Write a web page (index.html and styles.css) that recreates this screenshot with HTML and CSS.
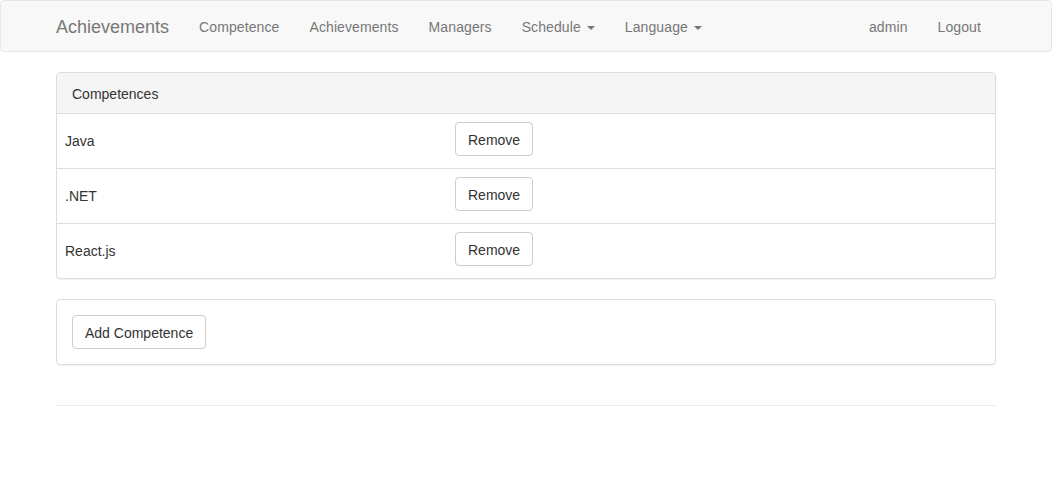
FILE: index.html
```html
<!DOCTYPE html>
<html lang="en">
<head>
<meta charset="utf-8">
<title>Achievements</title>
<link rel="stylesheet" href="styles.css">
</head>
<body>
<nav class="navbar">
  <div class="container navbar-inner">
    <a class="navbar-brand" href="#">Achievements</a>
    <ul class="nav">
      <li><a href="#">Competence</a></li>
      <li><a href="#">Achievements</a></li>
      <li><a href="#">Managers</a></li>
      <li><a href="#">Schedule <span class="caret"></span></a></li>
      <li><a href="#">Language <span class="caret"></span></a></li>
    </ul>
    <ul class="nav nav-right">
      <li><a href="#">admin</a></li>
      <li><a href="#">Logout</a></li>
    </ul>
  </div>
</nav>
<main class="container">
  <section class="panel">
    <div class="panel-heading">Competences</div>
    <div class="rows">
      <div class="row"><div class="cell-name">Java</div><div class="cell-action"><button class="btn">Remove</button></div></div>
      <div class="row"><div class="cell-name">.NET</div><div class="cell-action"><button class="btn">Remove</button></div></div>
      <div class="row"><div class="cell-name">React.js</div><div class="cell-action"><button class="btn">Remove</button></div></div>
    </div>
  </section>
  <section class="panel">
    <div class="panel-body">
      <button class="btn">Add Competence</button>
    </div>
  </section>
  <hr class="divider">
</main>
</body>
</html>
```

FILE: styles.css
```css
* { box-sizing: border-box; }
html, body { margin: 0; padding: 0; }
body {
  font-family: "Liberation Sans", Arial, Helvetica, sans-serif;
  font-size: 14px;
  line-height: 20px;
  color: #333;
  background: #fff;
}
a { text-decoration: none; }
.container {
  width: 970px;
  margin: 0 auto;
  padding: 0 15px;
}
.navbar {
  background: #f8f8f8;
  border: 1px solid #e7e7e7;
  border-radius: 4px;
  min-height: 52px;
  margin-bottom: 20px;
}
.navbar-inner {
  display: flex;
  align-items: stretch;
  height: 50px;
}
.navbar-brand {
  margin-left: -15px;
  padding: 16px 15px 14px;
  font-size: 18px;
  line-height: 20px;
  height: 50px;
  color: #777;
}
.nav {
  list-style: none;
  margin: 0;
  padding: 0;
  display: flex;
}
.nav li a {
  display: block;
  padding: 16px 15px 14px;
  line-height: 20px;
  color: #777;
  letter-spacing: 0.1px;
}
.nav-right {
  margin-left: auto;
}
.caret {
  display: inline-block;
  width: 0;
  height: 0;
  margin-left: 2px;
  vertical-align: middle;
  border-top: 4px solid #777;
  border-left: 4px solid transparent;
  border-right: 4px solid transparent;
}
.panel {
  border: 1px solid #ddd;
  border-radius: 4px;
  margin-bottom: 20px;
  box-shadow: 0 1px 1px rgba(0,0,0,0.05);
  background: #fff;
}
.panel-heading {
  background: #f5f5f5;
  border-bottom: 1px solid #ddd;
  border-radius: 3px 3px 0 0;
  padding: 11px 15px 9px;
  color: #333;
}
.row {
  display: grid;
  grid-template-columns: 390px 1fr;
  align-items: center;
  border-top: 1px solid #ddd;
}
.row:first-child { border-top: 0; }
.cell-name, .cell-action {
  padding: 8px;
}
.cell-action { padding-bottom: 12px; }
.panel-body { padding: 15px; }
.btn {
  display: inline-block;
  font-family: inherit;
  font-size: 14px;
  line-height: 20px;
  padding: 7px 12px 5px;
  height: 34px;
  color: #333;
  background: #fff;
  border: 1px solid #ccc;
  border-radius: 4px;
  cursor: pointer;
}
.divider {
  margin: 40px 0 20px;
  border: 0;
  border-top: 1px solid #eee;
}
```
